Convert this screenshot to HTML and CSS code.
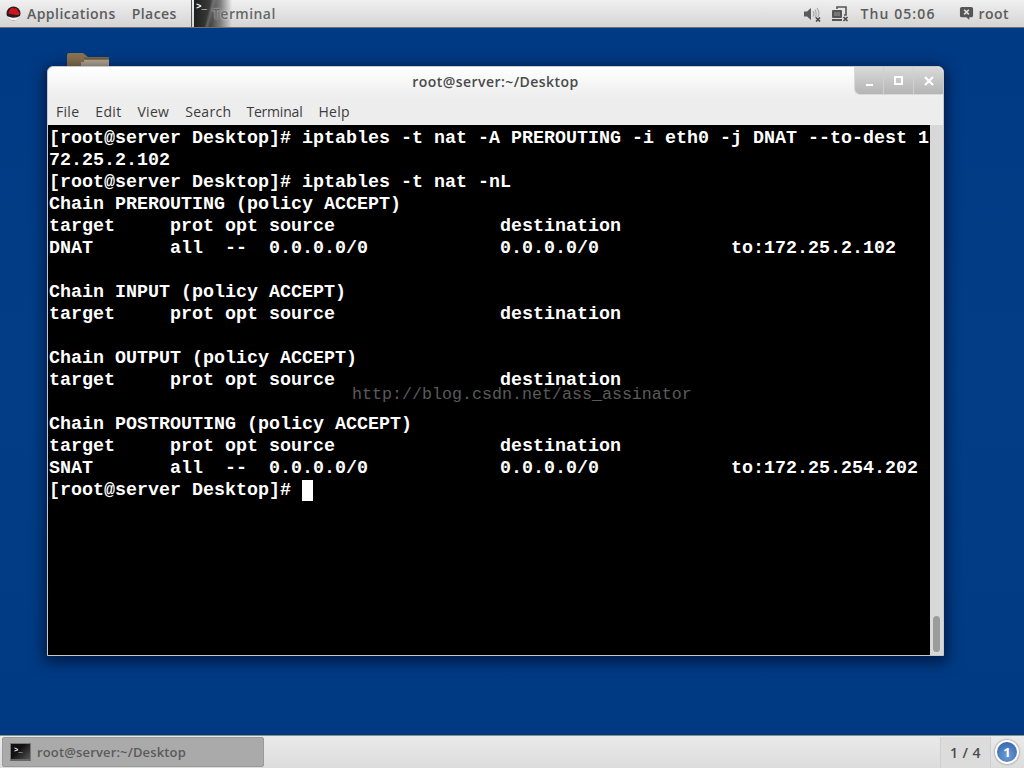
FILE: index.html
```html
<!DOCTYPE html>
<html lang="en">
<head>
<meta charset="utf-8">
<title>root@server:~/Desktop</title>
<link rel="stylesheet" href="styles.css">
</head>
<body>
<header class="top-panel">
  <div class="menu-group">
    <svg class="redhat" viewBox="0 0 15 15" width="15" height="15"><circle cx="7.500" cy="7.500" r="7" fill="#2a1c1c"/><path d="M.8 9.800C3 12 11 12.500 14.200 9.800 13.500 12.800 10.800 14.500 7.500 14.500 4.200 14.500 1.600 12.600.8 9.800Z" fill="#f5f5f5"/><path d="M2.200 7.200C3.500 4.800 4 2.200 6 2c1.200-.1 1.700.5 2.800.4C10.500 2 11.500 3.400 11.800 5.300c.8.600 1.800 1.200 1.800 2.200 0 1.300-2 1.700-4 1.400C6.800 8.500 4 7.800 2.200 7.200Z" fill="#d3141f"/></svg>
    <span class="panel-label apps">Applications</span>
    <span class="panel-label">Places</span>
  </div>
  <div class="task-current">
    <span class="task-glow"><span class="prompt-mark">&gt;_</span></span>
    <span class="panel-label task-name">Terminal</span>
  </div>
  <div class="status">
    <svg class="st-icon" viewBox="0 0 18 16" width="18" height="16"><path d="M1 5.500h3l4-3.500v12l-4-3.500H1Z" fill="#5a5a5a"/><path d="M10 5c1 1.500 1 4 0 5.500M12 3.500c1.500 2 1.500 6.500 0 8.500M14 2c2 3 2 7 1 9" fill="none" stroke="#a8a8a8" stroke-width="1.200"/><path d="M13 11.500l4 4m0-4l-4 4" stroke="#4a4a4a" stroke-width="1.700"/></svg>
    <svg class="st-icon net" viewBox="0 0 18 16" width="18" height="16"><rect x="1" y="4" width="10" height="8" rx="1" fill="#555"/><rect x="3" y="6" width="6" height="4" fill="#777"/><rect x="1" y="13" width="10" height="2" fill="#555"/><path d="M6 3V1h9v8h-2" fill="none" stroke="#555" stroke-width="1.600"/><path d="M12.500 11l4 4m0-4l-4 4" stroke="#4a4a4a" stroke-width="1.700"/></svg>
    <span class="panel-label clock">Thu 05:06</span>
    <span class="user">
      <svg viewBox="0 0 16 16" width="15" height="15"><path d="M3 1h10a2 2 0 0 1 2 2v7a2 2 0 0 1-2 2h-2v3l-3-3H3a2 2 0 0 1-2-2V3a2 2 0 0 1 2-2Z" fill="#555"/><path d="M5.500 4l5 5m0-5l-5 5" stroke="#ddd" stroke-width="1.800"/></svg>
      <span class="panel-label">root</span>
    </span>
  </div>
</header>

<main class="desktop">
  <svg class="folder" viewBox="0 0 44 14" width="44" height="14"><path d="M1 14V2a2 2 0 0 1 2-2h14l5 4h20a1 1 0 0 1 1 1v9Z" fill="#8a7350"/><path d="M15 14V9h3v-2h25v7Z" fill="#b8ad98"/><rect x="18" y="4.500" width="25" height="1.200" fill="#6e5a3e"/></svg>

  <section class="window">
    <div class="titlebar">
      <span class="title">root@server:~/Desktop</span>
      <div class="win-buttons">
        <span class="win-btn"><span class="ico-min"></span></span>
        <span class="win-btn"><span class="ico-max"></span></span>
        <span class="win-btn"><svg viewBox="0 0 10 10" width="10" height="10"><path d="M1 1l8 8m0-8l-8 8" stroke="#fff" stroke-width="2.200"/></svg></span>
      </div>
    </div>
    <nav class="menubar">
      <span>File</span><span>Edit</span><span>View</span><span>Search</span><span class="menu-tight">Terminal</span><span>Help</span>
    </nav>
    <div class="term-wrap">
      <div class="terminal">
<pre class="screen">[root@server Desktop]# iptables -t nat -A PREROUTING -i eth0 -j DNAT --to-dest 1
72.25.2.102
[root@server Desktop]# iptables -t nat -nL
Chain PREROUTING (policy ACCEPT)
target     prot opt source               destination
DNAT       all  --  0.0.0.0/0            0.0.0.0/0            to:172.25.2.102

Chain INPUT (policy ACCEPT)
target     prot opt source               destination

Chain OUTPUT (policy ACCEPT)
target     prot opt source               destination

Chain POSTROUTING (policy ACCEPT)
target     prot opt source               destination
SNAT       all  --  0.0.0.0/0            0.0.0.0/0            to:172.25.254.202
[root@server Desktop]# <span class="cursor"> </span></pre>
        <span class="watermark">http://blog.csdn.net/ass_assinator</span>
      </div>
      <div class="scrollbar"><span class="thumb"></span></div>
    </div>
  </section>
</main>

<footer class="bottom-panel">
  <div class="task-btn">
    <span class="task-icon"><span class="prompt-mark small">&gt;_</span></span>
    <span class="task-text">root@server:~/Desktop</span>
  </div>
  <div class="pager">1 / 4</div>
  <div class="badge">1</div>
</footer>
</body>
</html>
```

FILE: styles.css
```css
* { box-sizing: border-box; }
html, body { margin: 0; height: 100%; }
body {
  width: 1024px;
  height: 768px;
  display: flex;
  flex-direction: column;
  overflow: hidden;
  font-family: "Open Sans", "Noto Sans", sans-serif;
  background: #013b85;
}

/* top panel */
.top-panel {
  height: 28px;
  flex: none;
  display: flex;
  align-items: center;
  padding-left: 6px;
  background: linear-gradient(#f0f0f0, #d4d4d4);
  border-bottom: 1px solid #6f6f6f;
}
.menu-group {
  display: flex;
  align-items: center;
  width: 185px;
  height: 100%;
}
.redhat { flex: none; margin-right: 6px; }
.panel-label {
  font-size: 14px;
  font-weight: 600;
  letter-spacing: .45px;
  color: #5c5c5c;
  white-space: nowrap;
}
.apps { margin-right: 16px; }
.task-current {
  display: flex;
  align-items: center;
  height: 100%;
  border-left: 1px solid #555;
  padding-left: 2px;
  position: relative;
}
.task-glow {
  display: block;
  width: 38px;
  height: 27px;
  background:
    linear-gradient(105deg, transparent 38%, rgba(150,150,150,.45) 44%, transparent 52%),
    linear-gradient(90deg, #1c1f1d 0%, #3a3c3a 40%, #808080 70%, rgba(215,215,215,0) 100%);
  color: #fff;
}
.prompt-mark {
  display: block;
  font: bold 9px/10px "Liberation Mono", monospace;
  padding: 2px 0 0 2px;
  color: #fff;
}
.prompt-mark.small { font-size: 7px; line-height: 8px; padding: 2px 0 0 3px; }
.task-name {
  margin-left: -20px;
  position: relative;
  color: #666;
  text-shadow: 0 0 2px #eee;
}
.status {
  margin-left: auto;
  display: flex;
  align-items: center;
  padding-right: 15px;
}
.st-icon { flex: none; margin-right: 10px; }
.st-icon.net { margin-right: 11px; }
.clock { margin-right: 23px; letter-spacing: 1.1px; }
.user { display: flex; align-items: center; gap: 5px; }

/* desktop */
.desktop {
  flex: 1;
  position: relative;
  background: linear-gradient(#013a84, #023d86 50%, #003a82);
}
.folder { position: absolute; left: 66px; top: 25px; }
.window {
  position: absolute;
  left: 47px;
  top: 38px;
  width: 897px;
  height: 590px;
  display: flex;
  flex-direction: column;
  background: #ededed;
  border: 1px solid #c8c8c8;
  border-radius: 6px 6px 0 0;
  box-shadow: 0 3px 14px 3px rgba(0, 0, 20, .55);
}
.titlebar {
  height: 30px;
  flex: none;
  display: flex;
  align-items: center;
  justify-content: center;
  padding-bottom: 2px;
  position: relative;
  background: linear-gradient(#ffffff, #eeeeee);
  border-radius: 6px 6px 0 0;
}
.title {
  font-size: 14px;
  font-weight: 600;
  letter-spacing: .45px;
  color: #4a4a4a;
}
.win-buttons {
  position: absolute;
  right: 0;
  top: 0;
  height: 28px;
  display: flex;
  border-radius: 0 6px 0 6px;
  border-bottom: 1px solid #dadada;
  border-left: 1px solid #dadada;
  background: linear-gradient(#d9d9d9, #b5b5b5);
  overflow: hidden;
}
.win-btn {
  width: 30px;
  display: flex;
  align-items: center;
  justify-content: center;
  border-left: 1px solid #cfcfcf;
}
.win-btn:first-child { border-left: 0; width: 28px; }
.ico-min { width: 7px; height: 2px; background: #fff; margin-top: 9px; }
.ico-max { width: 9px; height: 9px; border: 2px solid #fff; }
.menubar {
  height: 28px;
  flex: none;
  display: flex;
  align-items: center;
  gap: 16px;
  padding-left: 8px;
  font-size: 14px;
  letter-spacing: .3px;
  color: #3c3c3c;
  background: #ededed;
}
.menu-tight { letter-spacing: -.2px; margin-left: -1px; }
.term-wrap {
  flex: 1;
  display: flex;
  min-height: 0;
}
.terminal {
  flex: 1;
  background: #000;
  position: relative;
  padding: 3px 0 0 1px;
  overflow: hidden;
}
.screen {
  margin: 0;
  font: bold 18.33px/22px "Liberation Mono", monospace;
  color: #fff;
}
.cursor { background: #fff; }
.watermark {
  position: absolute;
  left: 304px;
  top: 260px;
  font: 16.67px/20px "Liberation Mono", monospace;
  color: #5a5a5a;
  white-space: nowrap;
}
.scrollbar {
  width: 13px;
  flex: none;
  display: flex;
  flex-direction: column;
  justify-content: flex-end;
  align-items: center;
  padding-bottom: 3px;
  background: #d8d8d8;
}
.thumb {
  width: 7px;
  height: 36px;
  border-radius: 4px;
  background: #9c9c9c;
}

/* bottom panel */
.bottom-panel {
  height: 33px;
  flex: none;
  display: flex;
  align-items: center;
  padding-left: 2px;
  border-top: 1px solid #8e8e8e;
  background: linear-gradient(#eaeaea, #dcdcdc);
}
.task-btn {
  width: 262px;
  height: 30px;
  display: flex;
  align-items: center;
  gap: 6px;
  padding-left: 7px;
  background: #aaaaaa;
  border: 1px solid #9a9a9a;
  border-radius: 2px;
}
.task-icon {
  width: 21px;
  height: 18px;
  flex: none;
  background: linear-gradient(135deg, #111 40%, #555);
  border: 1px solid #777;
  border-bottom: 2px solid #666;
  color: #fff;
}
.task-text {
  font-size: 13px;
  font-weight: 600;
  letter-spacing: .15px;
  color: #5a5a5a;
}
.pager {
  margin-left: auto;
  width: 51px;
  height: 31px;
  display: flex;
  align-items: center;
  justify-content: center;
  font-size: 14px;
  font-weight: 600;
  letter-spacing: .45px;
  color: #4c4c4c;
  background: #dcdcdc;
  border-left: 1px solid #cfcfcf;
  border-right: 1px solid #cfcfcf;
}
.badge {
  width: 24px;
  height: 24px;
  margin: 0 5px 0 4px;
  display: flex;
  align-items: center;
  justify-content: center;
  border-radius: 50%;
  border: 2px solid #fff;
  box-shadow: 0 0 2px #555;
  background: radial-gradient(circle at 50% 70%, #6f9bd6, #2a5ea6);
  color: #fff;
  font-size: 13px;
  font-weight: 700;
}
```
